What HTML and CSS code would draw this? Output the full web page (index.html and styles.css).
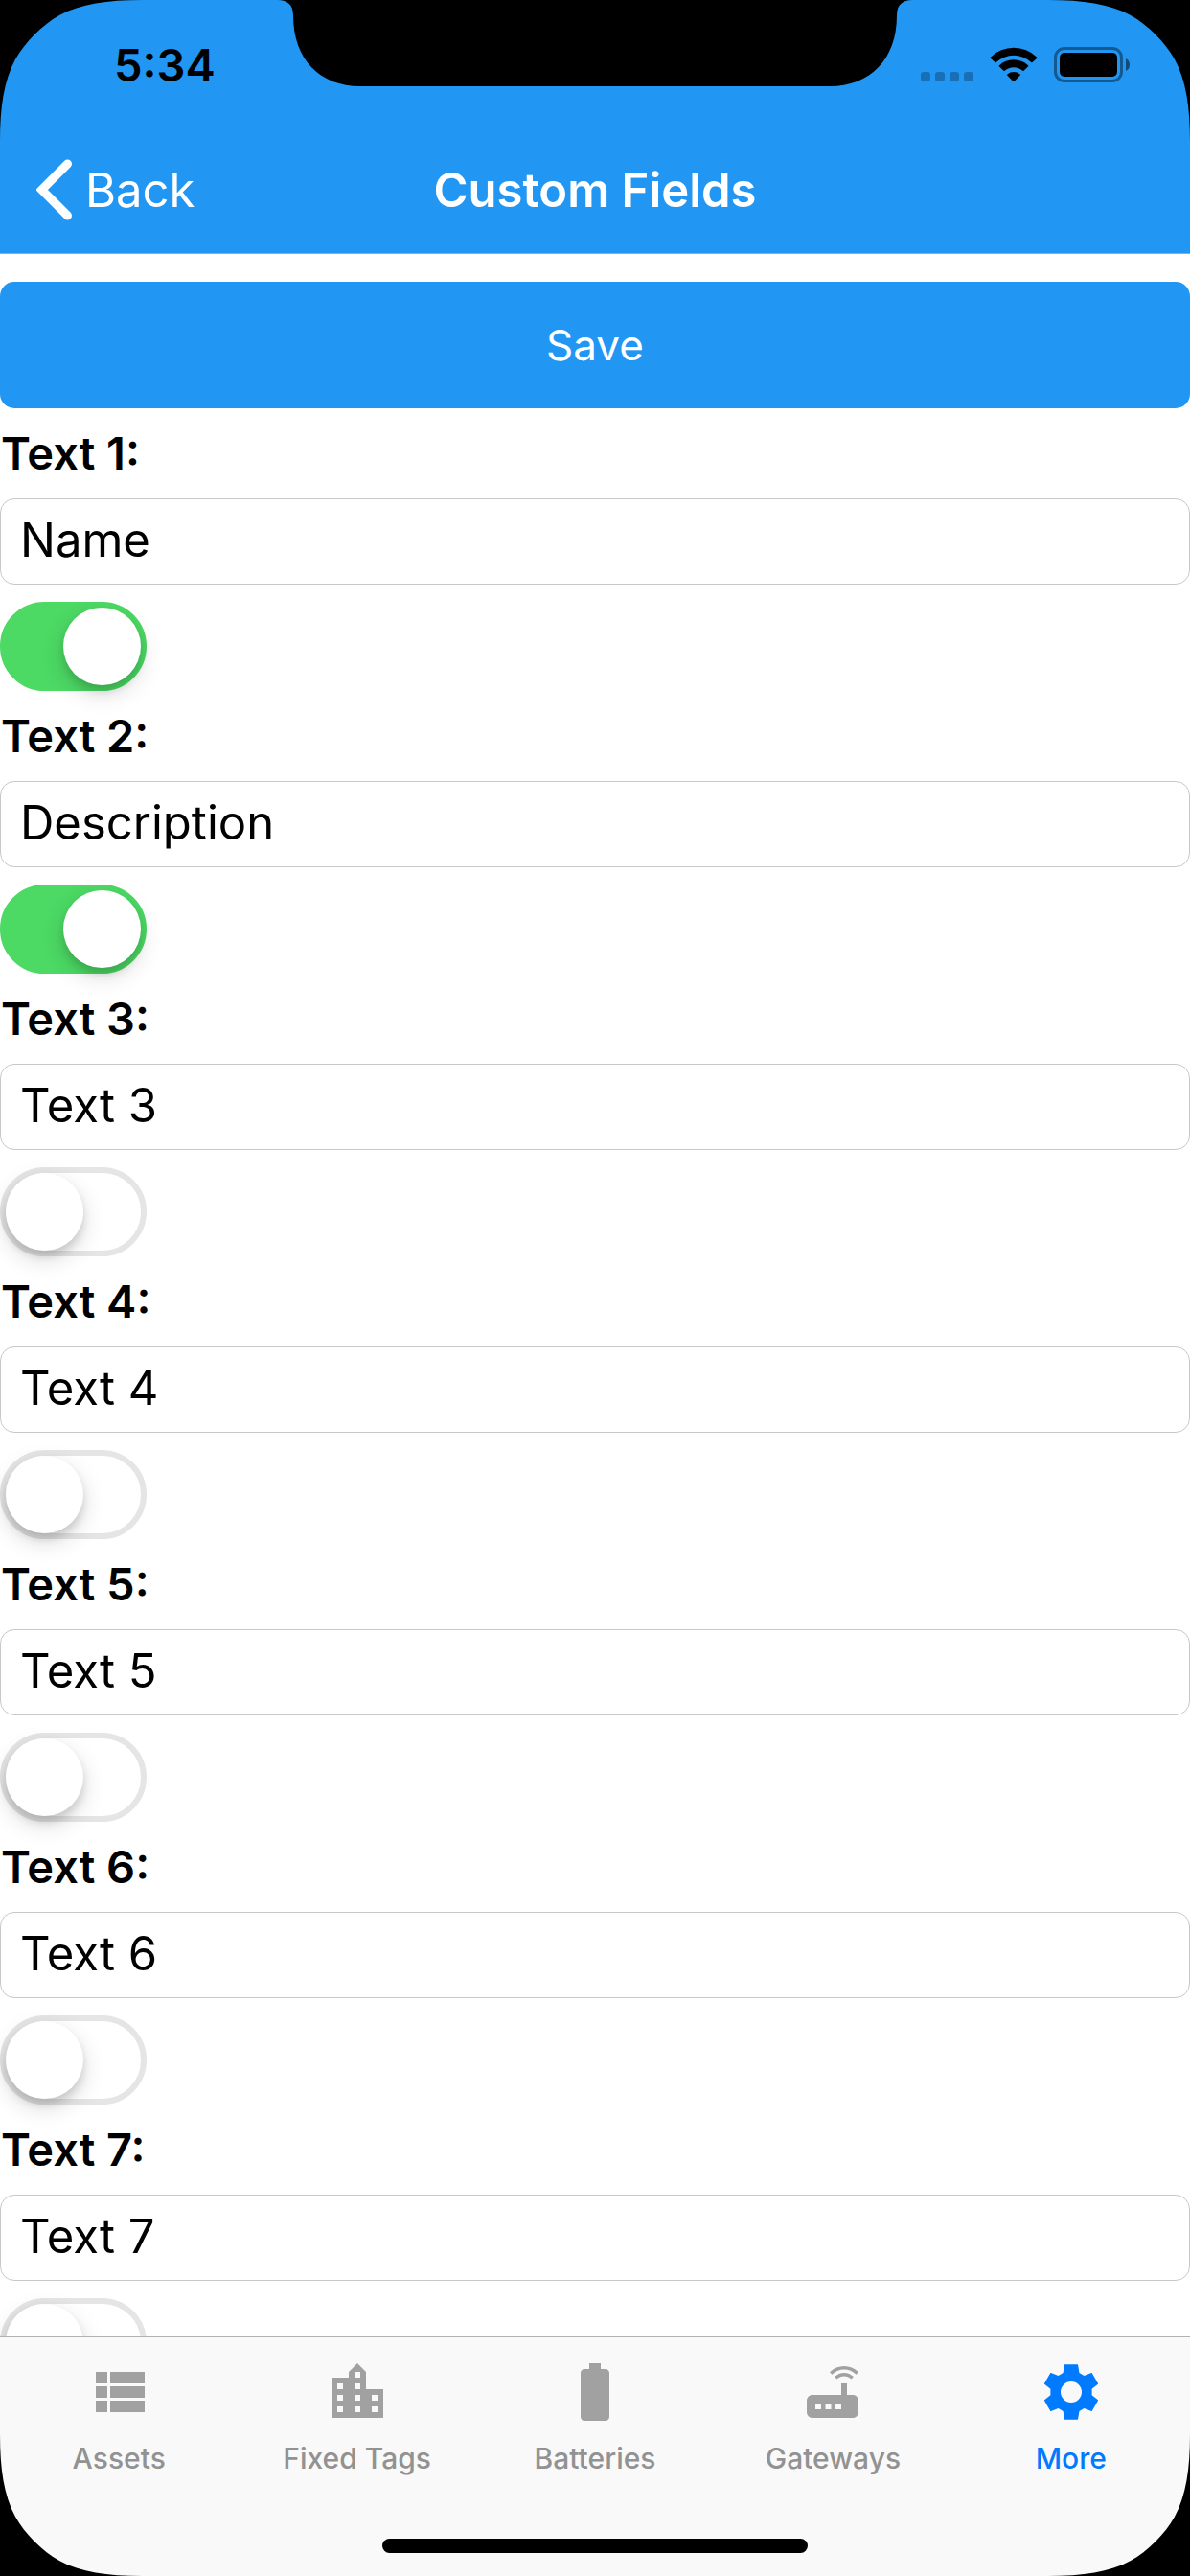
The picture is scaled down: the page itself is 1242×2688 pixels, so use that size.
FILE: index.html
```html
<!DOCTYPE html>
<html lang="en">
<head>
<meta charset="utf-8">
<meta name="viewport" content="width=device-width, initial-scale=1">
<title>Custom Fields</title>
<link rel="stylesheet" href="styles.css">
</head>
<body>
<div class="screen">
  <header class="header">
    <div class="status">
      <time class="clock">5:34</time>
      <div class="indicators">
        <svg class="signal" viewBox="0 0 55 10" aria-hidden="true"><rect width="10" height="10" rx="3"/><rect x="15" width="10" height="10" rx="3"/><rect x="30" width="10" height="10" rx="3"/><rect x="45" width="10" height="10" rx="3"/></svg>
        <svg class="wifi" viewBox="0 0 50 37" aria-hidden="true"><path d="M1 10.500A34.500 34.500 0 0 1 49 10.500q.7.700 0 1.400L44.500 16q-.6.500-1.200 0A27 27 0 0 0 6.700 16q-.6.500-1.200 0L1 11.900q-.7-.700 0-1.400zM10 19.200A22 22 0 0 1 40 19.200q.7.700 0 1.400L35.500 24.700q-.6.500-1.200 0A14 14 0 0 0 15.700 24.700q-.6.500-1.200 0L10 20.600q-.7-.700 0-1.400zM18.400 28.500A10 10 0 0 1 31.600 28.500q.7.600 0 1.200L25.700 35.700q-.7.600-1.400 0L18.400 29.700q-.7-.6 0-1.200z"/></svg>
        <svg class="battery" viewBox="0 0 80 37" aria-hidden="true"><rect x="1.500" y="1.500" width="69" height="34" rx="9.500" fill="none" stroke="#000" stroke-opacity=".4" stroke-width="3"/><rect x="6" y="6" width="60" height="25" rx="5"/><path d="M75 12Q79 14 79 18.500T75 25z" fill-opacity=".5"/></svg>
      </div>
    </div>
    <nav class="navbar">
      <a class="back" href="#more"><svg class="chevron" viewBox="0 0 38 64" aria-hidden="true"><path d="M32.500 5 5.500 32 32.500 59"/></svg>Back</a>
      <h1 class="title">Custom Fields</h1>
    </nav>
  </header>

  <main class="content">
    <form class="form">
      <button class="save" type="button">Save</button>
      <div class="field"><label class="label" for="text1">Text 1:</label><input class="input" id="text1" type="text" value="Name"><input class="switch" type="checkbox" role="switch" aria-label="Enable Text 1" checked></div>
      <div class="field"><label class="label" for="text2">Text 2:</label><input class="input" id="text2" type="text" value="Description"><input class="switch" type="checkbox" role="switch" aria-label="Enable Text 2" checked></div>
      <div class="field"><label class="label" for="text3">Text 3:</label><input class="input" id="text3" type="text" value="Text 3"><input class="switch" type="checkbox" role="switch" aria-label="Enable Text 3"></div>
      <div class="field"><label class="label" for="text4">Text 4:</label><input class="input" id="text4" type="text" value="Text 4"><input class="switch" type="checkbox" role="switch" aria-label="Enable Text 4"></div>
      <div class="field"><label class="label" for="text5">Text 5:</label><input class="input" id="text5" type="text" value="Text 5"><input class="switch" type="checkbox" role="switch" aria-label="Enable Text 5"></div>
      <div class="field"><label class="label" for="text6">Text 6:</label><input class="input" id="text6" type="text" value="Text 6"><input class="switch" type="checkbox" role="switch" aria-label="Enable Text 6"></div>
      <div class="field"><label class="label" for="text7">Text 7:</label><input class="input" id="text7" type="text" value="Text 7"><input class="switch" type="checkbox" role="switch" aria-label="Enable Text 7"></div>
    </form>
  </main>

  <footer class="footer">
    <nav class="tabs">
      <a class="tab" href="#assets"><svg class="icon" viewBox="0 0 24 24" aria-hidden="true"><path d="M4 14h4v-4H4v4zm0 5h4v-4H4v4zM4 9h4V5H4v4zm5 5h12v-4H9v4zm0 5h12v-4H9v4zM9 5v4h12V5H9z"/></svg>Assets</a>
      <a class="tab" href="#tags"><svg class="icon" viewBox="0 0 24 24" aria-hidden="true"><path d="M15 11V5l-3-3-3 3v2H3v14h18V11h-6zm-8 8H5v-2h2v2zm0-4H5v-2h2v2zm0-4H5V9h2v2zm6 8h-2v-2h2v2zm0-4h-2v-2h2v2zm0-4h-2V9h2v2zm0-4h-2V5h2v2zm6 12h-2v-2h2v2zm0-4h-2v-2h2v2z"/></svg>Fixed Tags</a>
      <a class="tab" href="#batteries"><svg class="icon" viewBox="0 0 24 24" aria-hidden="true"><path d="M15.670 4H14V2h-4v2H8.330C7.600 4 7 4.600 7 5.330v15.330C7 21.400 7.600 22 8.330 22h7.330c.740 0 1.340-.600 1.340-1.330V5.330C17 4.600 16.400 4 15.670 4z"/></svg>Batteries</a>
      <a class="tab" href="#gateways"><svg class="icon" viewBox="0 0 24 24" aria-hidden="true"><path d="M20.200 5.900l.8-.8C19.600 3.700 17.800 3 16 3s-3.600.7-5 2.100l.8.8C13 4.800 14.500 4.200 16 4.200s3 .6 4.200 1.700zm-.9.800c-.9-.9-2.100-1.400-3.300-1.400s-2.400.5-3.300 1.400l.8.800c.7-.7 1.600-1 2.500-1 .9 0 1.800.3 2.500 1l.8-.8zM19 13h-2V9h-2v4H5c-1.100 0-2 .9-2 2v4c0 1.100.9 2 2 2h14c1.100 0 2-.9 2-2v-4c0-1.100-.9-2-2-2zM8 18H6v-2h2v2zm3.500 0h-2v-2h2v2zm3.500 0h-2v-2h2v2z"/></svg>Gateways</a>
      <a class="tab tab-active" id="more" href="#more" aria-current="page"><svg class="icon" viewBox="0 0 216 216" fill-rule="evenodd" aria-hidden="true"><path d="M88 22h40q1 0 1.300 1l4 25 15 9 23-9q1.500-.5 2 .5l19 33q.6 1-.5 2l-19 15v19l19 15q1 1 .5 2l-19 33q-.6 1-2 .5l-23-9-15 9-4 25q-.3 1-1.300 1H88q-1 0-1.300-1l-4-25-15-9-23 9q-1.500.5-2-.5l-19-33q-.6-1 .5-2l19-15v-19l-19-15q-1-1-.5-2l19-33q.6-1 2-.5l23 9 15-9 4-25q.3-1 1.300-1zM108 75a33 33 0 1 0 0 66 33 33 0 1 0 0-66z"/></svg>More</a>
    </nav>
    <div class="home-bar"></div>
  </footer>

  <div class="bezel" aria-hidden="true">
    <svg class="notch" viewBox="0 0 662 90"><path d="M0 0C10 0 16 5 16 16C16 62 44 90 86 90H576C618 90 646 62 646 16C646 5 652 0 662 0z"/></svg>
    <svg class="corner corner-tl" viewBox="0 0 150 150"><path d="M0 0H148C112 0 84 4 62 16C44 26 26 44 16 62C4 84 0 112 0 148z"/></svg>
    <svg class="corner corner-tr" viewBox="0 0 150 150"><path d="M0 0H148C112 0 84 4 62 16C44 26 26 44 16 62C4 84 0 112 0 148z"/></svg>
    <svg class="corner corner-bl" viewBox="0 0 150 150"><path d="M0 0H148C112 0 84 4 62 16C44 26 26 44 16 62C4 84 0 112 0 148z"/></svg>
    <svg class="corner corner-br" viewBox="0 0 150 150"><path d="M0 0H148C112 0 84 4 62 16C44 26 26 44 16 62C4 84 0 112 0 148z"/></svg>
  </div>
</div>
</body>
</html>
```
FILE: styles.css
```css
* { box-sizing: border-box; }

body {
  margin: 0;
  background: #fff;
  color: #000;
  font-family: Inter, "Liberation Sans", sans-serif;
  font-size: 49px;
}

a { color: inherit; text-decoration: none; }

.screen {
  position: relative;
  display: flex;
  flex-direction: column;
  height: 100vh;
  overflow: hidden;
}

/* Header */
.header {
  flex: none;
  background: #2196f3;
  border-bottom: 1px solid #a7a7aa;
}

.status {
  display: flex;
  justify-content: space-between;
  height: 132px;
  padding: 0 64px 0 119px;
}

.clock {
  font-size: 47px;
  font-weight: 600;
  line-height: 136px;
}

.indicators {
  display: flex;
  align-items: flex-end;
  gap: 17px;
  height: 86px;
  margin-right: -2px;
}

.signal { width: 55px; height: 10px; margin-bottom: 1px; opacity: .25; }
.wifi { width: 50px; height: 37px; }
.battery { width: 80px; height: 37px; }

.navbar {
  display: grid;
  grid-template-columns: 1fr auto 1fr;
  align-items: center;
  height: 132px;
  padding: 0 38px;
  color: #fff;
}

.back { display: flex; align-items: center; gap: 13px; }

.chevron {
  width: 38px;
  height: 64px;
  fill: none;
  stroke: #fff;
  stroke-width: 9px;
  stroke-linecap: round;
}

.title { margin: 0; font-size: 49px; font-weight: 600; }

/* Form */
.content {
  flex: 1;
  min-height: 0;
  overflow-y: auto;
  scrollbar-width: none;
}

.form { padding-top: 29px; }

.save {
  display: block;
  width: 100%;
  height: 132px;
  border: 0;
  border-radius: 15px;
  background: #2196f3;
  color: #fff;
  font: inherit;
  font-size: 44px;
}

.field {
  display: flex;
  flex-direction: column;
  align-items: flex-start;
  gap: 18px;
  padding-top: 18px;
}

.label { padding-left: 1px; font-size: 47px; font-weight: 600; line-height: 58px; }

.input {
  width: 100%;
  height: 90px;
  padding: 0 20px 4px;
  border: 1px solid #c8c8c8;
  border-radius: 15px;
  background: #fff;
  color: #000;
  font: inherit;
}

.switch {
  appearance: none;
  width: 153px;
  height: 93px;
  margin: 0;
  border: 6px solid #e5e5e5;
  border-radius: 47px;
  background: #fff;
}

.switch::before {
  content: "";
  display: block;
  width: 81px;
  height: 81px;
  border-radius: 50%;
  background: #fff;
  box-shadow: 0 9px 24px rgba(0, 0, 0, .15), 0 6px 9px rgba(0, 0, 0, .12);
}

.switch:checked { border-color: #4cd964; background: #4cd964; }
.switch:checked::before { margin-left: auto; }

/* Tab bar */
.footer {
  position: relative;
  flex: none;
  padding: 21px 0 24px;
  border-top: 1px solid #b2b2b2;
  background: #f9f9f9;
}

.tabs { display: grid; grid-template-columns: repeat(5, 1fr); }

.tab {
  display: flex;
  flex-direction: column;
  align-items: center;
  gap: 14px;
  height: 189px;
  color: #929292;
  font-size: 30px;
  font-weight: 500;
  line-height: 38px;
}

.tab-active { color: #007aff; }

.icon { width: 72px; height: 72px; fill: #a1a1a1; }
.tab-active .icon { fill: #007aff; }

.home-bar {
  width: 444px;
  height: 15px;
  margin: 0 auto;
  border-radius: 8px;
  background: #000;
}

/* Device outline over the screen */
.bezel { position: absolute; inset: 0; pointer-events: none; }
.notch { position: absolute; top: 0; left: 50%; width: 662px; height: 90px; transform: translateX(-50%); }
.corner { position: absolute; width: 150px; height: 150px; }
.corner-tl { top: 0; left: 0; }
.corner-tr { top: 0; right: 0; transform: scaleX(-1); }
.corner-bl { bottom: 0; left: 0; transform: scaleY(-1); }
.corner-br { right: 0; bottom: 0; transform: scale(-1); }
```
